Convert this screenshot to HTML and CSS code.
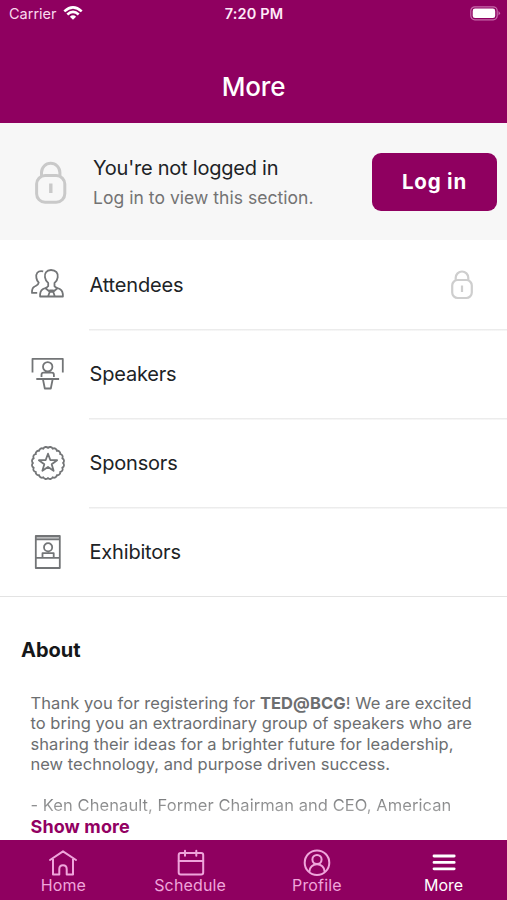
FILE: index.html
```html
<!DOCTYPE html>
<html lang="en">
<head>
<meta charset="utf-8">
<title>More</title>
<link rel="stylesheet" href="styles.css">
</head>
<body>
<div class="app">
  <header class="header">
    <div class="status">
      <div class="carrier"><span>Carrier</span>
        <svg class="wifi" width="20" height="14" viewBox="0 0 20 14" fill="none" stroke="#fff" stroke-width="2.6"><path d="M1.3 5.4Q10-2.6 18.7 5.4"/><path d="M4.3 8.5Q10 3.3 15.7 8.5"/><path d="M10 13.7L6.9 10.7Q10 7.9 13.1 10.7Z" fill="#fff" stroke="none"/></svg>
      </div>
      <div class="time">7:20 PM</div>
      <svg class="battery" width="31" height="15" viewBox="0 0 31 15"><rect x=".8" y=".8" width="26.4" height="13" rx="4" fill="none" stroke="#c76aab" stroke-width="1.2"/><rect x="2.7" y="2.6" width="22.5" height="9.4" rx="2.3" fill="#fff"/><path d="M28.5 5v4.5q3-2.2 0-4.5" fill="#c76aab"/></svg>
    </div>
    <h1 class="title">More</h1>
  </header>

  <section class="login">
    <svg class="login-lock" width="34" height="44" viewBox="0 0 34 44" fill="none" stroke="#c9c9c9" stroke-width="3"><path d="M7.5 16V12.5a9.2 9.2 0 0 1 18.4 0V16"/><rect x="2.6" y="15.6" width="28.2" height="26.6" rx="8.5"/><path d="M16.8 23.5v9.5" stroke-width="3.4"/></svg>
    <div class="login-text">
      <div class="login-title">You're not logged in</div>
      <div class="login-sub">Log in to view this section.</div>
    </div>
    <button class="login-button">Log in</button>
  </section>

  <nav class="menu">
    <a class="row">
      <svg class="icon" width="36" height="36" viewBox="0 0 36 36"><path d="M13.2 4.3C7.4 3 5.5 7.2 6.4 11c.4 2.4 1.3 3.6 2.3 4.7-.3 2.5-2 2.7-4.4 4-2.1 1.2-2.5 3.3-2.3 6.2h5.2M21 3c-4.7 0-6.7 3.4-6 7.4.4 2.7 1.5 4.3 3.2 5.5v3.3c-.8 1.6-3.8 2-5.5 3.1-2.4 1.5-2.8 3.5-2.6 7.2h22.8c.2-3.7-.7-5.9-2.8-7.2-1.8-1.1-4.6-1.5-5.6-3.1v-3.3c1.7-1.2 2.9-2.8 3.2-5.5C28.4 6.4 26 3 21 3zM15.5 21.2l4.3 3.6h3.4l4.2-3.6M19.8 24.8l-1.7 4.5M23.2 24.8l1.6 4.5M19.8 24.8v-1.4h3.4v1.4"/></svg>
      <span class="label">Attendees</span>
      <svg class="row-lock" width="24" height="31" viewBox="0 0 24 31" fill="none" stroke="#cecece" stroke-width="2.2"><path d="M5.7 11.5V8.8a6.3 6.3 0 0 1 12.6 0V11.5"/><rect x="2.2" y="11" width="19.6" height="18" rx="5.5"/><path d="M12 16.5v6.5"/></svg>
    </a>
    <a class="row">
      <svg class="icon" width="36" height="36" viewBox="0 0 36 36"><path d="M2.5 16.5V2.8h30.3v13.7M13 10.8a4.7 4.7 0 1 0 9.4 0 4.7 4.7 0 1 0-9.4 0M11.5 21v-2.2q0-2.1 2.1-2.1h8.2q2.1 0 2.1 2.1V21M6.3 23h22.8M13 23.5l1.8 9h6l1.8-9"/></svg>
      <span class="label">Speakers</span>
    </a>
    <a class="row">
      <svg class="icon" width="36" height="36" viewBox="0 0 36 36"><path d="M33 18A2.7 2.7 0 0 1 32.27 22.64A2.7 2.7 0 0 1 30.14 26.82A2.7 2.7 0 0 1 26.82 30.14A2.7 2.7 0 0 1 22.64 32.27A2.7 2.7 0 0 1 18 33A2.7 2.7 0 0 1 13.36 32.27A2.7 2.7 0 0 1 9.18 30.14A2.7 2.7 0 0 1 5.86 26.82A2.7 2.7 0 0 1 3.73 22.64A2.7 2.7 0 0 1 3 18A2.7 2.7 0 0 1 3.73 13.36A2.7 2.7 0 0 1 5.86 9.18A2.7 2.7 0 0 1 9.18 5.86A2.7 2.7 0 0 1 13.36 3.73A2.7 2.7 0 0 1 18 3A2.7 2.7 0 0 1 22.64 3.73A2.7 2.7 0 0 1 26.82 5.86A2.7 2.7 0 0 1 30.14 9.18A2.7 2.7 0 0 1 32.27 13.36A2.7 2.7 0 0 1 33 18z"/><path d="M18 8.7l2.3 6.3 6.8.2-5.4 4.1 1.9 6.5-5.6-3.9-5.6 3.9 1.9-6.5-5.4-4.1 6.8-.2z"/></svg>
      <span class="label">Sponsors</span>
    </a>
    <a class="row">
      <svg class="icon" width="36" height="36" viewBox="0 0 36 36"><path d="M5.8 2h24v32h-24zM5.8 5.4h24M5.8 23.8h24M14 13.3a4.1 4.1 0 1 0 8.2 0 4.1 4.1 0 1 0-8.2 0M12.5 23.8v-4.6h11.2v4.6"/><path d="M5.8 3.7h24" opacity=".5"/></svg>
      <span class="label">Exhibitors</span>
    </a>
  </nav>

  <section class="about">
    <h2 class="about-title">About</h2>
    <div class="about-text">
      <div>Thank you for registering for <b>TED@BCG</b>! We are excited</div>
      <div class="tight">to bring you an extraordinary group of speakers who are</div>
      <div>sharing their ideas for a brighter future for leadership,</div>
      <div class="tight">new technology, and purpose driven success.</div>
      <div class="quote">- Ken Chenault, Former Chairman and CEO, American</div>
    </div>
    <a class="more-link">Show more</a>
  </section>

  <nav class="tabs">
    <a class="tab"><svg width="30" height="28" viewBox="0 0 30 28" fill="none" stroke="#efa5db" stroke-width="2" stroke-linejoin="round" stroke-linecap="round"><path d="M2 11L15 2.3 28 11M5 10v15.5h6.3V20q0-3.8 3.7-3.8t3.7 3.8v5.5H25V10"/></svg><span>Home</span></a>
    <a class="tab"><svg width="30" height="28" viewBox="0 0 30 28" fill="none" stroke="#efa5db" stroke-width="2" stroke-linecap="round"><rect x="3.7" y="4" width="24.5" height="21.5" rx="2"/><path d="M3.7 12h24.5M10 1.7v5M21.3 1.7v5"/></svg><span>Schedule</span></a>
    <a class="tab"><svg width="30" height="28" viewBox="0 0 30 28" fill="none" stroke="#efa5db" stroke-width="2"><circle cx="15" cy="13.7" r="12.3"/><circle cx="15" cy="10.5" r="4.6"/><path d="M7.3 23c0-10.3 15.4-10.3 15.4 0"/></svg><span>Profile</span></a>
    <a class="tab active"><svg width="30" height="28" viewBox="0 0 30 28" fill="none" stroke="#fff" stroke-width="2.8" stroke-linecap="round"><path d="M5 7h20.2M5 13.4h20.2M5 19.8h20.2"/></svg><span>More</span></a>
  </nav>
</div>
</body>
</html>
```
FILE: styles.css
```css
* { box-sizing: border-box; }
body { margin: 0; font-family: Inter, "Liberation Sans", sans-serif; background: #fff; }
.app { width: 507px; height: 900px; display: flex; flex-direction: column; overflow: hidden; white-space: nowrap; }

.header { height: 123px; flex: none; background: #8f0060; color: #fff; }
.status { height: 28px; display: grid; grid-template-columns: 1fr auto 1fr; align-items: center; padding: 0 6px 2px 9px; }
.carrier { display: flex; align-items: center; gap: 6px; font-size: 14.5px; color: #f9d9ef; }
.wifi { margin-top: -1px; }
.time { font-size: 14.5px; font-weight: 600; color: #ffe9f8; letter-spacing: .15px; position: relative; left: -1px; }
.battery { justify-self: end; }
.title { margin: 42px 0 0; font-size: 26px; line-height: 34px; font-weight: 500; text-align: center; letter-spacing: -.2px; }

.login { height: 117px; flex: none; display: flex; align-items: center; background: #f7f7f7; padding: 0 10px 0 34px; }
.login-text { margin-left: 25px; }
.login-title { font-size: 20px; line-height: 28px; color: #202326; letter-spacing: -.23px; }
.login-sub { font-size: 17.5px; line-height: 24px; margin-top: 4px; color: #737373; letter-spacing: .04px; }
.login-button { margin-left: auto; width: 125px; height: 58px; border: 0; border-radius: 9px; background: #8f0060; color: #fff; font: 700 20.5px Inter, sans-serif; letter-spacing: .8px; padding: 0; }

.menu { flex: none; border-bottom: 1px solid #e3e3e3; }
.row { height: 89px; display: flex; align-items: center; padding-left: 29px; }
.row + .row { background: linear-gradient(#ececec, #ececec) 89px 0 / 418px 1.5px no-repeat; }
.icon { fill: none; stroke: #737577; stroke-width: 1.8; stroke-linejoin: round; flex: none; position: relative; left: .6px; }
.label { margin-left: 24.5px; font-size: 20px; color: #202326; letter-spacing: -.18px; }
.row-lock { margin-left: auto; margin-right: 33px; }

.about { flex: 1; padding: 38px 0 0 21px; }
.about-title { margin: 0; font-size: 20px; line-height: 30px; font-weight: 700; color: #151719; letter-spacing: 0; }
.about-text { margin: 28px 0 0 9.5px; font-size: 16.5px; line-height: 20.4px; letter-spacing: .07px; color: #6c6e70; }
.tight { letter-spacing: .025px; }
.quote { margin-top: 20.4px; background: linear-gradient(#707274, #aaa); background-clip: text; -webkit-background-clip: text; color: transparent; }
.more-link { display: block; margin-left: 9.5px; font-size: 18px; line-height: 23px; font-weight: 700; letter-spacing: .1px; color: #920062; }

.tabs { height: 60px; flex: none; display: grid; grid-template-columns: repeat(4, 1fr); background: #8f0060; color: #efa5db; font-size: 16px; }
.tab { display: flex; flex-direction: column; align-items: center; padding-top: 9px; line-height: 17px; letter-spacing: .15px; }
.tab.active { color: #fff; letter-spacing: 0; }
```
